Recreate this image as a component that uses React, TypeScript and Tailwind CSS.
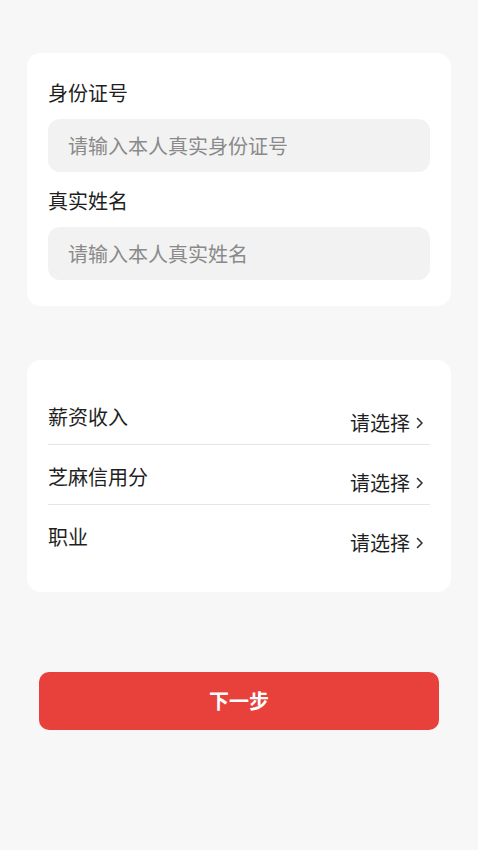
const font = { fontFamily: '"Noto Sans CJK SC", "Noto Sans", sans-serif' }

function Field({ label, placeholder, first }: { label: string; placeholder: string; first?: boolean }) {
  return (
    <div className={first ? "" : "mt-[16px]"}>
      <div className="text-[20px] leading-[26px] text-[#1f1f1f]">{label}</div>
      <input
        className="mt-[13px] block h-[53px] w-full rounded-[12px] bg-[#f2f2f2] px-[20px] text-[20px] text-[#222] outline-none placeholder:text-[#8a8a8a]"
        placeholder={placeholder}
        style={font}
      />
    </div>
  )
}

function Chevron() {
  return (
    <svg width="8" height="12" viewBox="0 0 8 12" className="ml-[6px]">
      <polyline points="1.5,1.5 6,6 1.5,10.5" fill="none" stroke="#333" strokeWidth="1.6" strokeLinecap="round" strokeLinejoin="round" />
    </svg>
  )
}

function SelectRow({ label, last }: { label: string; last?: boolean }) {
  return (
    <div className={"flex h-[60px] items-center justify-between " + (last ? "" : "border-b border-[#e6e6e6]")}>
      <span className="mt-[4px] text-[20px] leading-[26px] text-[#1f1f1f]">{label}</span>
      <span className="mr-[6px] mt-[16px] flex items-center text-[20px] leading-[26px] text-[#1f1f1f]">
        请选择
        <Chevron />
      </span>
    </div>
  )
}

export default function App() {
  return (
    <div className="min-h-[850px] bg-[#f7f7f7] pt-[53px]" style={font}>
      <div className="mx-[27px] rounded-[14px] bg-white px-[21px] pb-[26px] pt-[27px]">
        <Field label="身份证号" placeholder="请输入本人真实身份证号" first />
        <Field label="真实姓名" placeholder="请输入本人真实姓名" />
      </div>

      <div className="mx-[27px] mt-[54px] rounded-[14px] bg-white px-[21px] pb-[27px] pt-[25px]">
        <SelectRow label="薪资收入" />
        <SelectRow label="芝麻信用分" />
        <SelectRow label="职业" last />
      </div>

      <div className="mx-[39px] mt-[80px]">
        <button className="flex h-[58px] w-full items-center justify-center rounded-[10px] bg-[#e8403a] text-[20px] font-bold text-white" style={font}>
          下一步
        </button>
      </div>
    </div>
  )
}
